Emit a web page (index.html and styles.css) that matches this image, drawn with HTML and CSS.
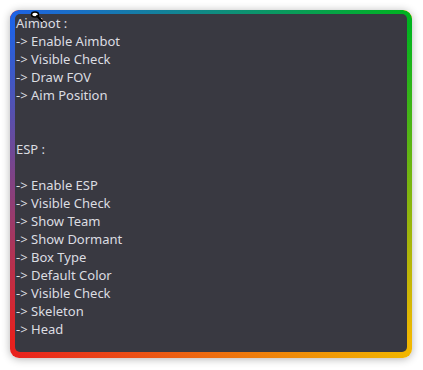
FILE: index.html
```html
<!DOCTYPE html>
<html lang="en">
<head>
  <meta charset="UTF-8">
  <meta name="viewport" content="width=device-width, initial-scale=1.0">
  <title>Menu</title>
  <link rel="stylesheet" href="styles.css">
</head>
<body>
  <div class="frame">
    <div class="panel">
      <div class="line">Aimbot :</div>
      <div class="line">-&gt; Enable Aimbot</div>
      <div class="line">-&gt; Visible Check</div>
      <div class="line">-&gt; Draw FOV</div>
      <div class="line">-&gt; Aim Position</div>
      <div class="line"></div>
      <div class="line"></div>
      <div class="line">ESP :</div>
      <div class="line"></div>
      <div class="line">-&gt; Enable ESP</div>
      <div class="line">-&gt; Visible Check</div>
      <div class="line">-&gt; Show Team</div>
      <div class="line">-&gt; Show Dormant</div>
      <div class="line">-&gt; Box Type</div>
      <div class="line">-&gt; Default Color</div>
      <div class="line">-&gt; Visible Check</div>
      <div class="line">-&gt; Skeleton</div>
      <div class="line">-&gt; Head</div>

      <svg class="cursor" width="14" height="12" viewBox="0 0 14 12">
        <ellipse cx="5" cy="3.5" rx="3.5" ry="2.5" fill="#fff" stroke="#000" stroke-width="1.5"/>
        <path d="M7 5 L12 10" stroke="#000" stroke-width="2" stroke-linecap="round"/>
      </svg>
    </div>
  </div>
</body>
</html>
```
FILE: styles.css
```css
body {
    margin: 0px;
    background-color: #fff;
    font-family: "Noto Sans", Arial, sans-serif;
}

.frame {
    position: relative;
    margin: 10px;
    width: 402px;
    height: 348px;
    padding: 5px;
    box-sizing: border-box;
    border-radius: 9px;
    background: linear-gradient(to right, #e8201e, #f2b800);
    box-shadow: 0px 1px 8px rgba(0, 0, 0, 0.3);
}

/* top half of the border colours, fading into the bottom ones */
.frame::before {
    content: "";
    position: absolute;
    inset: 0;
    border-radius: 9px;
    background: linear-gradient(to right, #1f62e6, #00b41e);
    -webkit-mask-image: linear-gradient(to bottom, #000 5%, transparent 95%);
    mask-image: linear-gradient(to bottom, #000 5%, transparent 95%);
}

.panel {
    position: relative;
    z-index: 1;
    height: 100%;
    padding: 0px 1px;
    box-sizing: border-box;
    background-color: #393941;
    border-radius: 5px;
    color: #dcdde2;
    font-size: 13px;
}

.line {
    height: 18px;
    line-height: 18px;
    white-space: nowrap;
}

.line:first-child {
    margin-top: -1px;
}

.cursor {
    position: absolute;
    top: -3px;
    left: 15px;
}
```
